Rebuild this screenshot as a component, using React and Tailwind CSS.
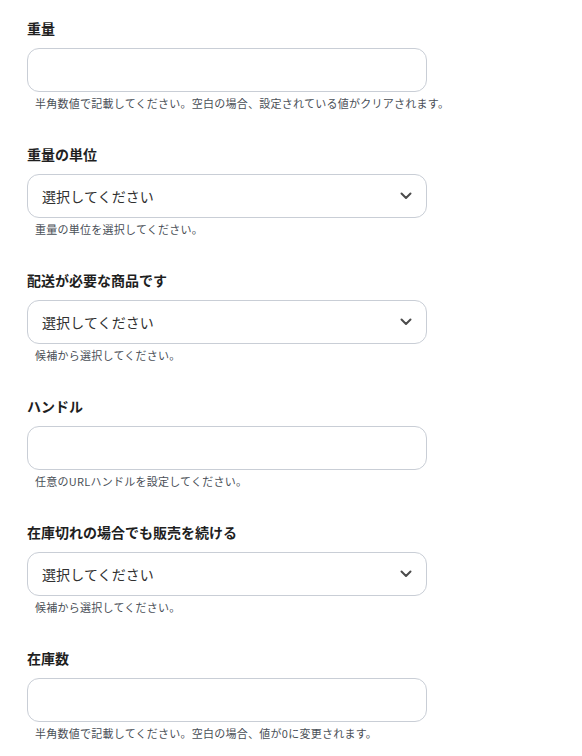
import React from "react";

const font = { fontFamily: '"Noto Sans CJK JP", "Noto Sans", sans-serif' };

function Chevron() {
  return (
    <svg width="12" height="8" viewBox="0 0 12 8" fill="none" className="shrink-0">
      <path d="M1.5 1.5 L6 6 L10.5 1.5" stroke="#4b4b4b" strokeWidth="2" strokeLinecap="round" strokeLinejoin="round" />
    </svg>
  );
}

function Field({ label, help, select }) {
  return (
    <div className="flex flex-col">
      <div className="text-[14px] leading-[18px] font-bold text-[#1f1f1f]">{label}</div>
      <div className="mt-[11px] h-[44px] w-[400px] rounded-[12px] border border-[#c9ced6] bg-white flex items-center pl-[14px] pr-[14px]">
        {select && (
          <>
            <span className="flex-1 text-[14px] text-[#303030] tracking-[0.1px]">選択してください</span>
            <Chevron />
          </>
        )}
      </div>
      <div className="mt-[3px] pl-[8px] text-[11px] leading-[16px] tracking-[0.25px] text-[#4a4f57]">{help}</div>
    </div>
  );
}

export default function App() {
  return (
    <div className="min-h-[756px] bg-white pl-[27px] pt-[19px] flex flex-col gap-[34px]" style={font}>
      <Field label="重量" help="半角数値で記載してください。空白の場合、設定されている値がクリアされます。" />
      <Field label="重量の単位" help="重量の単位を選択してください。" select />
      <Field label="配送が必要な商品です" help="候補から選択してください。" select />
      <Field label="ハンドル" help="任意のURLハンドルを設定してください。" />
      <Field label="在庫切れの場合でも販売を続ける" help="候補から選択してください。" select />
      <Field label="在庫数" help="半角数値で記載してください。空白の場合、値が0に変更されます。" />
    </div>
  );
}
